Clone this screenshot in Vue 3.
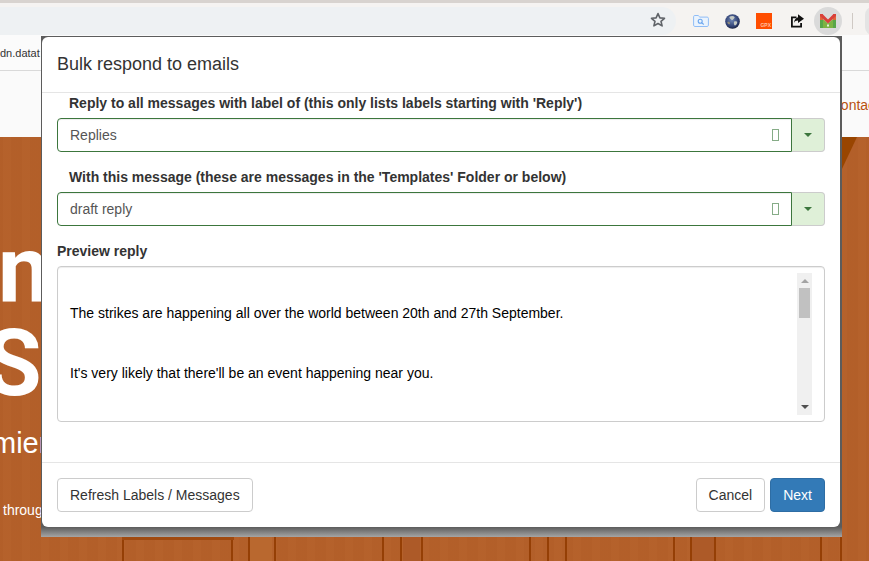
<script setup>
</script>

<template>
  <div class="page">
    <div class="titlebar"></div>
    <div class="toolbar">
      <div class="omnibox">
        <svg class="star" width="16" height="16" viewBox="0 0 16 16"><path d="M8 1.600l1.900 4.300 4.600.4-3.500 3 1.100 4.600L8 11.500l-4.100 2.400L5 9.300l-3.500-3 4.600-.4z" fill="none" stroke="#5f6368" stroke-width="1.600" stroke-linejoin="round"/></svg>
      </div>
      <div class="exts">
        <svg class="ext folder" width="16" height="12" viewBox="0 0 16 12"><path d="M.6 1.600C.6.900 1.100.5 1.800.5h3.400l1.600 1.600h7.400c.7 0 1.200.5 1.200 1.200v6.900c0 .7-.5 1.300-1.200 1.300H1.800c-.7 0-1.200-.6-1.200-1.300z" fill="#eaf3fd" stroke="#90bdf6"/><circle cx="7.200" cy="6.200" r="2" fill="none" stroke="#6aa5ee" stroke-width="1.100"/><path d="M8.600 7.600l2.200 1.900" stroke="#6aa5ee" stroke-width="1.100"/></svg>
        <svg class="ext globe" width="15" height="15" viewBox="0 0 15 15">
          <defs>
            <radialGradient id="earth" cx="0.45" cy="0.4" r="0.65">
              <stop offset="0" stop-color="#6f86b4"/>
              <stop offset="0.7" stop-color="#2f3f72"/>
              <stop offset="1" stop-color="#10162c"/>
            </radialGradient>
          </defs>
          <circle cx="7.500" cy="7.500" r="7.300" fill="url(#earth)"/>
          <path d="M4.500 2.800c1.800-1 4.200-.9 5 .1.600 1-.8 1.500-1.500 2.700-.5 1-1.800.4-2.400-.5-.6-.7-1.500-1.500-1.100-2.300zM9.200 7.500c1.400-.4 3-.1 3 .9 0 1.400-1.300 3-2.400 3-.9-.6-1.300-2.700-.6-3.900z" fill="#c4c9c4"/>
          <path d="M2.500 8c1-.5 2-.2 2.500.7.400.9-.4 1.800-1.300 1.500-.8-.3-1.600-1.500-1.200-2.200z" fill="#8f8a78"/>
        </svg>
        <div class="ext gpx">GPX</div>
        <svg class="ext share" width="16" height="16" viewBox="0 0 16 16"><path d="M2 3.500h5.500v1.800H3.800v7.400h7.400V10H13v4.500H2z" fill="#111"/><path d="M9 1.300l6 4.400-6 4.400V7.600C7 7.600 5.800 8.400 5 10c.2-3 1.700-5.300 4-5.700z" fill="#111"/></svg>
        <div class="gmail-wrap">
          <svg width="16" height="14" viewBox="0 0 16 14"><path d="M0 0h3v14H0zM13 0h3v14h-3z" fill="#e2643a"/><path d="M3 14V5l5 4.500L13 5v9z" fill="#7cb342"/><path d="M0 0h2.500L8 5.500 13.500 0H16v2L8 9.500 0 2z" fill="#d9403a"/><path d="M0 6h3v8H0zM13 6h3v8h-3z" fill="#58a648"/><path d="M7 10.500h2v2H7z" fill="#e8f3dc"/></svg>
        </div>
        <div class="sep"></div>
        <div class="avatar"></div>
      </div>
    </div>
    <div class="bookmarks">
      <span class="url">dn.datat</span>
    </div>
    <div class="site-header">
      <span class="contact">contact</span>
    </div>
    <div class="hero">
      <div class="wedge"></div>
      <div class="hero-big">n</div>
      <div class="hero-big hero-s">S</div>
      <div class="hero-mid">mier</div>
      <div class="hero-small">through</div>
      <div class="wood"></div>
    </div>

    <div class="modal-shade">
      <div class="modal">
        <header class="modal-head">Bulk respond to emails</header>
        <div class="modal-body">
          <label class="lab indent">Reply to all messages with label of (this only lists labels starting with 'Reply')</label>
          <div class="group">
            <div class="field">
              <span>Replies</span>
              <span class="tofu"></span>
            </div>
            <div class="caret-btn"><i class="caret"></i></div>
          </div>
          <label class="lab indent second">With this message (these are messages in the 'Templates' Folder or below)</label>
          <div class="group">
            <div class="field">
              <span>draft reply</span>
              <span class="tofu"></span>
            </div>
            <div class="caret-btn"><i class="caret"></i></div>
          </div>
          <label class="lab preview-lab">Preview reply</label>
          <div class="preview">
            <div class="preview-text">
              <p>The strikes are happening all over the world between 20th and 27th September.</p>
              <p>It's very likely that there'll be an event happening near you.</p>
            </div>
            <div class="scroll">
              <i class="arrow up"></i>
              <div class="track"><div class="thumb"></div></div>
              <i class="arrow down"></i>
            </div>
          </div>
        </div>
        <footer class="modal-foot">
          <button class="btn">Refresh Labels / Messages</button>
          <div class="foot-right">
            <button class="btn">Cancel</button>
            <button class="btn primary">Next</button>
          </div>
        </footer>
      </div>
    </div>
  </div>
</template>

<style scoped>
.page {
  position: relative;
  width: 869px;
  height: 561px;
  overflow: hidden;
  font-family: "Liberation Sans", Arial, sans-serif;
  background: #fff;
}
.titlebar { height: 3px; background: #d8d3cf; }
.toolbar {
  height: 32px;
  background: #f5f3f1;
  display: flex;
  align-items: flex-end;
}
.omnibox {
  width: 676px;
  height: 28px;
  flex: none;
  background: #eef1f3;
  border-radius: 0 15px 15px 0;
  display: flex;
  align-items: center;
  justify-content: flex-end;
  padding: 0 10px 3px 0;
  box-sizing: border-box;
}
.star { display: block; }
.exts { display: flex; align-items: center; flex: 1; min-width: 0; height: 28px; }
.ext { display: block; flex: none; }
.folder { margin-left: 17px; }
.globe { margin-left: 16px; }
.gpx {
  width: 16px; height: 16px; margin-left: 16px;
  background: #ff4d00; color: #ffc0a0;
  font-size: 5px; font-weight: bold; text-align: right;
  line-height: 5px; padding: 10px 1px 0 0; box-sizing: border-box;
}
.share { margin-left: 17px; }
.gmail-wrap {
  flex: none;
  width: 28px; height: 28px; border-radius: 50%;
  background: #dadada; margin-left: 9px;
  display: flex; align-items: center; justify-content: center;
}
.sep { flex: none; width: 1px; height: 16px; background: #cfc9c4; margin-left: 10px; }
.avatar { flex: none; width: 8px; height: 28px; border-radius: 14px 0 0 14px; background: #e4e4e4; margin-left: 12px; }
.bookmarks {
  height: 35px;
  background: #fbfbfb;
  border-bottom: 1px solid #d9d9d9;
  display: flex;
  align-items: center;
}
.url { font-size: 11px; color: #333; margin-top: 1px; }
.site-header {
  height: 66px;
  background: #fafafa;
  display: flex;
  justify-content: flex-end;
  align-items: center;
}
.contact { font-size: 14px; color: #b8500f; margin-right: -10px; margin-top: 1px; }
.hero {
  position: relative;
  height: 424px;
  background:
    repeating-linear-gradient(90deg, rgba(120,50,0,.025) 0 3px, rgba(255,190,120,.015) 3px 11px, rgba(120,50,0,.02) 11px 19px),
    #b4602a;
  color: #fff;
}
.wedge {
  position: absolute;
  left: 841px;
  top: 0;
  width: 16px;
  height: 34px;
  background: #994500;
  clip-path: polygon(0 0, 100% 0, 0 100%);
}
.hero-big {
  position: absolute;
  left: -2px;
  top: 83px;
  font-family: Roboto, "Liberation Sans", sans-serif;
  font-size: 92px;
  font-weight: 700;
  line-height: 100px;
}
.hero-s { left: -15px; top: 177px; }
.hero-mid { position: absolute; left: -8px; top: 288px; font-size: 29px; line-height: 36px; }
.hero-small { position: absolute; left: 3px; top: 364px; font-size: 14px; line-height: 18px; }
.wood {
  position: absolute;
  left: 0;
  right: 0;
  bottom: 0;
  height: 26px;
  background:
    linear-gradient(#a04a10, #a04a10) 122px 2px / 112px 3px no-repeat,
    linear-gradient(#953f05, #953f05) 122px 0 / 2px 100% no-repeat,
    linear-gradient(#953f05, #953f05) 231px 0 / 2px 100% no-repeat,
    linear-gradient(#953f05, #953f05) 248px 0 / 2px 100% no-repeat,
    linear-gradient(#b9682f, #b9682f) 250px 0 / 22px 100% no-repeat,
    linear-gradient(#953f05, #953f05) 274px 0 / 2px 100% no-repeat,
    linear-gradient(#953f05, #953f05) 382px 0 / 2px 100% no-repeat,
    linear-gradient(#953f05, #953f05) 400px 0 / 2px 100% no-repeat,
    linear-gradient(#ad5a28, #ad5a28) 403px 0 / 17px 100% no-repeat,
    linear-gradient(#953f05, #953f05) 421px 0 / 2px 100% no-repeat,
    linear-gradient(#953f05, #953f05) 529px 0 / 2px 100% no-repeat,
    linear-gradient(#953f05, #953f05) 547px 0 / 2px 100% no-repeat,
    linear-gradient(#953f05, #953f05) 565px 0 / 2px 100% no-repeat,
    linear-gradient(#953f05, #953f05) 673px 0 / 2px 100% no-repeat,
    linear-gradient(#953f05, #953f05) 690px 0 / 2px 100% no-repeat,
    linear-gradient(#ad5a28, #ad5a28) 692px 0 / 22px 100% no-repeat,
    linear-gradient(#953f05, #953f05) 714px 0 / 2px 100% no-repeat,
    linear-gradient(#953f05, #953f05) 820px 0 / 2px 100% no-repeat,
    linear-gradient(#953f05, #953f05) 840px 0 / 2px 100% no-repeat;
}

.modal-shade {
  position: absolute;
  left: 41px;
  top: 36px;
  width: 801px;
  height: 501px;
  background: linear-gradient(#5c5c5c 0, #5c5c5c 491px, #a5a5a5 100%);
}
.modal {
  width: 798px;
  height: 490px;
  margin-left: 1px;
  margin-top: 1px;
  box-sizing: border-box;
  background: #fff;
  border-radius: 6px;
  display: flex;
  flex-direction: column;
  color: #333;
  font-size: 14px;
}
.modal-head {
  height: 56px;
  box-sizing: border-box;
  padding: 15px 15px 0;
  font-size: 18px;
  line-height: 25px;
  border-bottom: 1px solid #e5e5e5;
  flex: none;
}
.modal-body { padding: 0 15px; flex: 1; }
.lab { display: block; font-weight: bold; line-height: 20px; }
.indent { padding-left: 12px; }
.group { display: flex; height: 34px; margin-top: 5px; }
.second { margin-top: 15px; }
.field {
  flex: 1;
  box-sizing: border-box;
  border: 1px solid #3c763d;
  border-radius: 4px 0 0 4px;
  padding: 0 12px;
  display: flex;
  align-items: center;
  justify-content: space-between;
  color: #555;
  box-shadow: inset 0 1px 1px rgba(0,0,0,.075);
}
.tofu {
  width: 7px; height: 12px;
  box-sizing: border-box;
  border: 1px solid #86ac87;
}
.caret-btn {
  width: 33px;
  flex: none;
  box-sizing: border-box;
  background: #dff0d8;
  border: 1px solid #ccc;
  border-left: 0;
  border-radius: 0 4px 4px 0;
  display: flex;
  align-items: center;
  justify-content: center;
}
.caret {
  display: block; width: 0; height: 0;
  border-top: 4px solid #3c763d;
  border-left: 4px solid transparent;
  border-right: 4px solid transparent;
}
.preview-lab { margin-top: 15px; }
.preview {
  margin-top: 5px;
  height: 156px;
  box-sizing: border-box;
  border: 1px solid #ccc;
  border-radius: 4px;
  display: flex;
  justify-content: space-between;
  padding: 6px 12px;
  color: #000;
  box-shadow: inset 0 1px 1px rgba(0,0,0,.075);
}
.preview-text p { margin: 0 0 40px; line-height: 20px; }
.preview-text { padding-top: 30px; }
.scroll {
  width: 15px;
  background: #f0f0f0;
  display: flex;
  flex-direction: column;
  align-items: center;
  flex: none;
}
.arrow { display: block; width: 0; height: 0; border-left: 4px solid transparent; border-right: 4px solid transparent; margin: 6px 0; }
.up { border-bottom: 4px solid #a3a3a3; }
.down { border-top: 4px solid #505050; }
.track { flex: 1; width: 100%; display: flex; justify-content: center; }
.thumb { width: 11px; height: 30px; background: #c1c1c1; margin-top: -1px; }
.modal-foot {
  flex: none;
  height: 65px;
  box-sizing: border-box;
  border-top: 1px solid #e5e5e5;
  padding: 15px;
  display: flex;
  justify-content: space-between;
}
.foot-right { display: flex; gap: 5px; }
.btn {
  font: 14px/20px "Liberation Sans", Arial, sans-serif;
  color: #333;
  background: #fff;
  border: 1px solid #ccc;
  border-radius: 4px;
  padding: 6px 12px;
  height: 34px;
}
.primary { background: #337ab7; border-color: #2e6da4; color: #fff; }
</style>
